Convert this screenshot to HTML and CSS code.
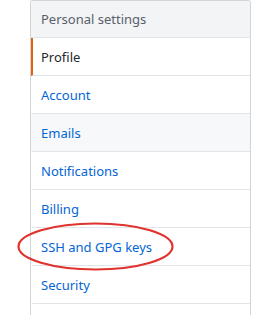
FILE: index.html
```html
<!DOCTYPE html>
<html lang="en">
<head>
    <meta charset="UTF-8">
    <title>Personal settings</title>
    <link rel="stylesheet" href="styles.css">
</head>
<body>
    <nav class="menu">
        <div class="menu-heading">Personal settings</div>
        <a class="menu-item selected" href="#">Profile</a>
        <a class="menu-item" href="#">Account</a>
        <a class="menu-item hover" href="#">Emails</a>
        <a class="menu-item" href="#">Notifications</a>
        <a class="menu-item" href="#">Billing</a>
        <a class="menu-item" href="#">SSH and GPG keys</a>
        <a class="menu-item" href="#">Security</a>
        <a class="menu-item last" href="#"></a>
    </nav>

    <svg class="circle-mark" width="264" height="315" viewBox="0 0 264 315">
        <ellipse cx="95.5" cy="246.5" rx="77" ry="23" fill="none" stroke="#e0332d" stroke-width="2.2"/>
    </svg>
</body>
</html>
```

FILE: styles.css
```css
* {
    margin: 0;
    padding: 0;
    box-sizing: border-box;
}

body {
    font-family: 'Noto Sans', 'Open Sans', sans-serif;
    font-size: 13px;
    background: #ffffff;
    width: 264px;
    height: 315px;
    overflow: hidden;
    position: relative;
}

.menu {
    margin-left: 30px;
    width: 221px;
    border: 1px solid #d1d5da;
    border-bottom: none;
    border-radius: 3px 3px 0 0;
    display: flex;
    flex-direction: column;
}

.menu-heading {
    height: 37px;
    padding: 0 10px;
    display: flex;
    align-items: center;
    background: #f3f4f6;
    color: #586069;
    border-bottom: 1px solid #e1e4e8;
    border-radius: 3px 3px 0 0;
}

.menu-item {
    height: 38px;
    padding: 0 8px;
    display: flex;
    align-items: center;
    color: #0366d6;
    text-decoration: none;
    border-bottom: 1px solid #e1e4e8;
    border-left: 2px solid transparent;
}

.menu-item.selected {
    color: #24292e;
    border-left-color: #e36209;
}

.menu-item.hover {
    background: #f6f8fa;
}

.menu-item.last {
    height: 11px;
    border-bottom: none;
}

.circle-mark {
    position: absolute;
    top: 0;
    left: 0;
    pointer-events: none;
}
```
